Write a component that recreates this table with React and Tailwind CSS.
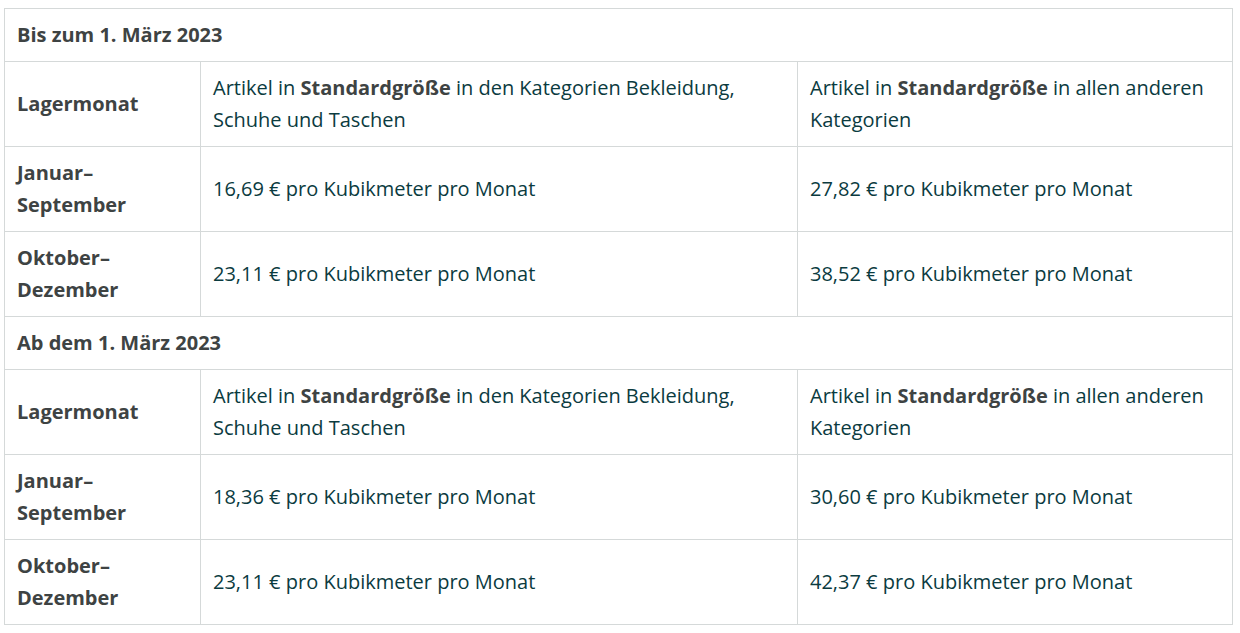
import React from "react";

const sections = [
  {
    title: "Bis zum 1. März 2023",
    rows: [
      ["Januar–", "September", "16,69 € pro Kubikmeter pro Monat", "27,82 € pro Kubikmeter pro Monat"],
      ["Oktober–", "Dezember", "23,11 € pro Kubikmeter pro Monat", "38,52 € pro Kubikmeter pro Monat"],
    ],
  },
  {
    title: "Ab dem 1. März 2023",
    rows: [
      ["Januar–", "September", "18,36 € pro Kubikmeter pro Monat", "30,60 € pro Kubikmeter pro Monat"],
      ["Oktober–", "Dezember", "23,11 € pro Kubikmeter pro Monat", "42,37 € pro Kubikmeter pro Monat"],
    ],
  },
];

const cell = "border border-[#d5d9d9] px-3 py-[10px] align-middle";

export default function App() {
  return (
    <div className="bg-white min-h-[633px] pt-[8px] pl-[4px] font-['Open_Sans',sans-serif] text-[20px] leading-[32px] text-[#0b3b3f]">
      <table className="w-[1228px] table-fixed border-collapse border border-[#d5d9d9]">
        <colgroup>
          <col className="w-[196px]" />
          <col className="w-[597px]" />
          <col className="w-[435px]" />
        </colgroup>
        <tbody>
          {sections.map((section, i) => (
            <React.Fragment key={i}>
              {/* section title over all columns */}
              <tr>
                <td colSpan={3} className={cell + " font-bold text-[#3e4343]"}>{section.title}</td>
              </tr>
              <tr>
                <td className={cell + " font-bold text-[#3e4343]"}>Lagermonat</td>
                <td className={cell}>
                  Artikel in <b className="font-bold text-[#3e4343]">Standardgröße</b> in den Kategorien Bekleidung, Schuhe und Taschen
                </td>
                <td className={cell}>
                  Artikel in <b className="font-bold text-[#3e4343]">Standardgröße</b> in allen anderen Kategorien
                </td>
              </tr>
              {section.rows.map((row, j) => (
                <tr key={j}>
                  <td className={cell + " font-bold text-[#3e4343]"}>
                    {row[0]}
                    <br />
                    {row[1]}
                  </td>
                  <td className={cell}>{row[2]}</td>
                  <td className={cell}>{row[3]}</td>
                </tr>
              ))}
            </React.Fragment>
          ))}
        </tbody>
      </table>
    </div>
  );
}
